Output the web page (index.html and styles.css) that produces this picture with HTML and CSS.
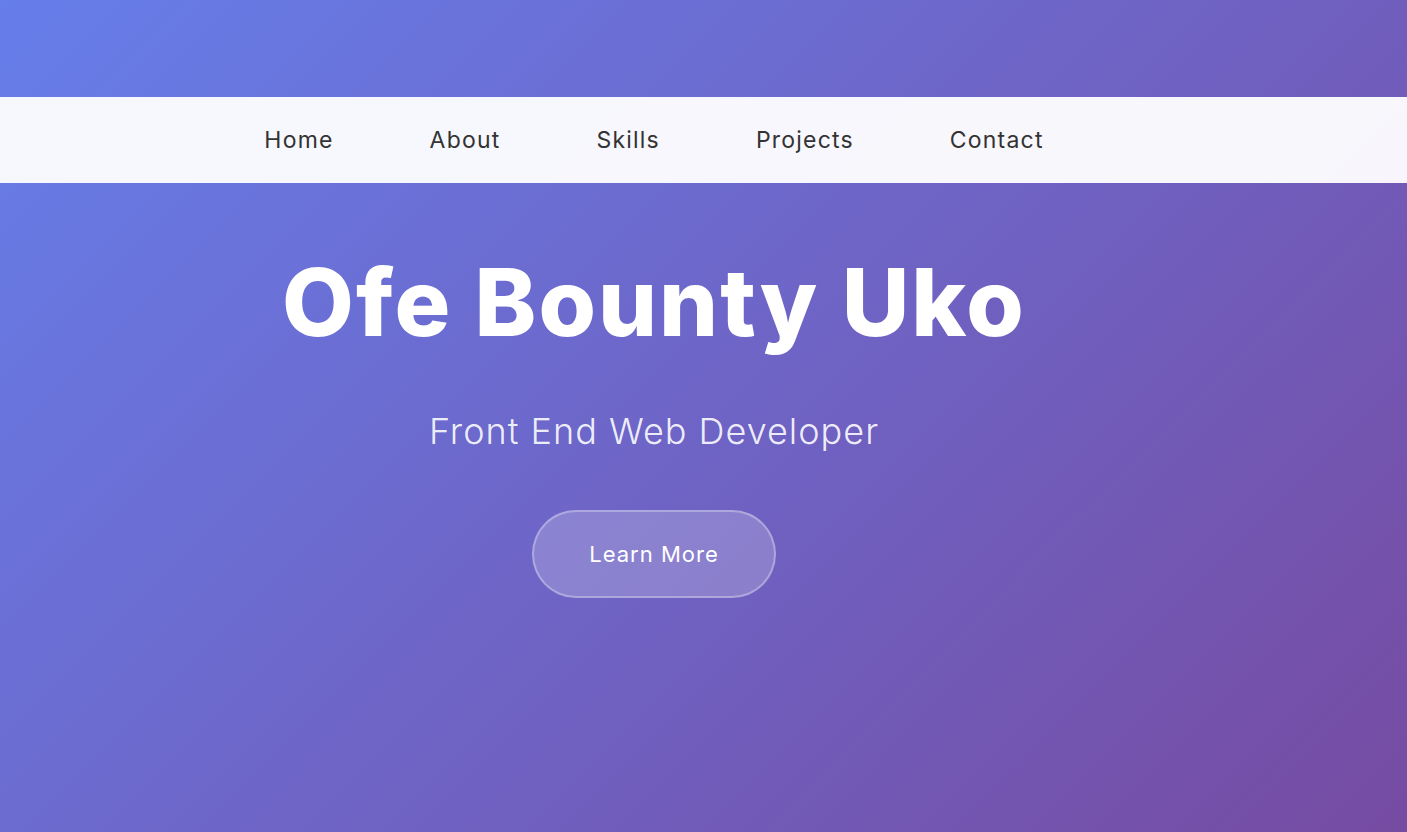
FILE: index.html
```html
<!DOCTYPE html>
<html lang="en">
<head>
<meta charset="utf-8">
<title>Ofe Bounty Uko</title>
<link rel="stylesheet" href="styles.css">
</head>
<body>
<div class="page">
  <nav class="nav">
    <ul class="nav-list">
      <li><a href="#home">Home</a></li>
      <li><a href="#about">About</a></li>
      <li><a href="#skills">Skills</a></li>
      <li><a href="#projects">Projects</a></li>
      <li><a href="#contact">Contact</a></li>
    </ul>
  </nav>
  <section class="hero">
    <h1 class="hero-title">Ofe Bounty Uko</h1>
    <p class="hero-sub">Front End Web Developer</p>
    <a class="hero-btn" href="#about">Learn More</a>
  </section>
</div>
</body>
</html>
```
FILE: styles.css
```css
html, body {
  margin: 0;
  padding: 0;
}
body {
  font-family: Inter, "Open Sans", "Liberation Sans", sans-serif;
}
.page {
  min-height: 100vh;
  box-sizing: border-box;
  padding-top: 97px;
  background: linear-gradient(135deg, #667eea 0%, #764ba2 100%);
}
.nav {
  height: 86px;
  background: rgba(255, 255, 255, 0.95);
}
.nav-list {
  width: 1308px;
  height: 100%;
  margin: 0;
  padding: 0;
  list-style: none;
  display: flex;
  justify-content: center;
  align-items: center;
  gap: 96px;
}
.nav-list a {
  color: #333;
  text-decoration: none;
  font-size: 23px;
  font-weight: 400;
  letter-spacing: 1.2px;
}
.hero {
  width: 1308px;
  display: flex;
  flex-direction: column;
  align-items: center;
  text-align: center;
  color: #fff;
}
.hero-title {
  margin: 64px 0 0;
  font-size: 93px;
  line-height: 1.2;
  font-weight: 800;
  letter-spacing: 2px;
}
.hero-sub {
  margin: 51px 0 0;
  font-size: 36px;
  line-height: 1.2;
  font-weight: 300;
  color: rgba(255, 255, 255, 0.9);
  letter-spacing: 1px;
}
.hero-btn {
  margin-top: 57px;
  padding: 27px 55px;
  font-size: 22px;
  line-height: 30px;
  color: #fff;
  text-decoration: none;
  background: rgba(255, 255, 255, 0.2);
  border: 2px solid rgba(255, 255, 255, 0.3);
  border-radius: 50px;
  letter-spacing: 1px;
}
```
